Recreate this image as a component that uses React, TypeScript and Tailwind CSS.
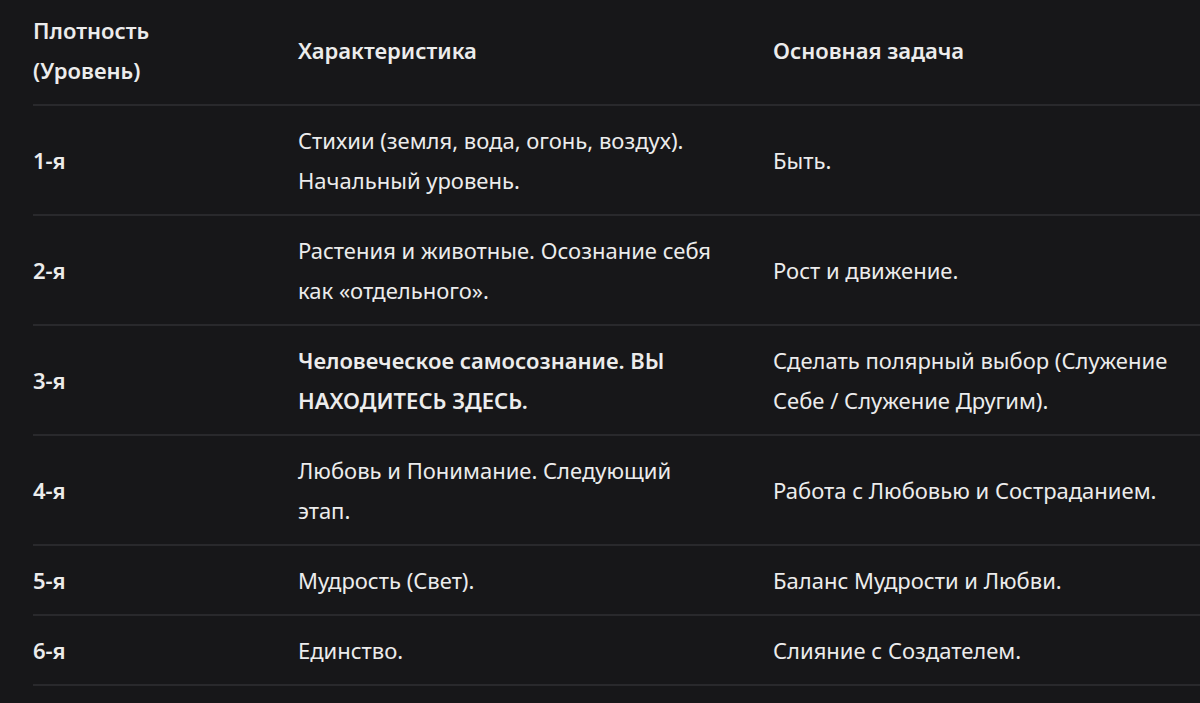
const rows: { level: string; desc: string; task: string; bold?: boolean }[] = [
  { level: "1-я", desc: "Стихии (земля, вода, огонь, воздух). Начальный уровень.", task: "Быть." },
  { level: "2-я", desc: "Растения и животные. Осознание себя как «отдельного».", task: "Рост и движение." },
  {
    level: "3-я",
    desc: "Человеческое самосознание. ВЫ НАХОДИТЕСЬ ЗДЕСЬ.",
    task: "Сделать полярный выбор (Служение Себе / Служение Другим).",
    bold: true,
  },
  { level: "4-я", desc: "Любовь и Понимание. Следующий этап.", task: "Работа с Любовью и Состраданием." },
  { level: "5-я", desc: "Мудрость (Свет).", task: "Баланс Мудрости и Любви." },
  { level: "6-я", desc: "Единство.", task: "Слияние с Создателем." },
]

export default function App() {
  return (
    <div
      className="min-h-screen w-full overflow-hidden bg-[#171719] pl-[33px] text-[#ececec]"
      style={{ fontFamily: '"Noto Sans", "Open Sans", sans-serif' }}
    >
      <table className="w-[1200px] table-fixed border-collapse text-[22px] leading-[40px]">
        <thead>
          <tr className="border-b-2 border-[#29292c]">
            <th className="w-[265px] pt-[10px] pb-[14px] pr-[60px] text-left align-middle font-semibold">
              Плотность (Уровень)
            </th>
            <th className="w-[475px] pt-[10px] pb-[14px] pr-[55px] text-left align-middle font-semibold">
              Характеристика
            </th>
            <th className="pt-[10px] pb-[14px] pr-[30px] text-left align-middle font-semibold">Основная задача</th>
          </tr>
        </thead>
        <tbody>
          {rows.map((r) => (
            <tr key={r.level} className="border-b-2 border-[#29292c]">
              <td className="py-[14px] pr-[60px] align-middle font-semibold">{r.level}</td>
              <td
                className={
                  r.bold ? "py-[14px] pr-[55px] align-middle font-semibold" : "py-[14px] pr-[55px] align-middle"
                }
              >
                {r.desc}
              </td>
              <td className="py-[14px] pr-[30px] align-middle">{r.task}</td>
            </tr>
          ))}
        </tbody>
      </table>
    </div>
  )
}
